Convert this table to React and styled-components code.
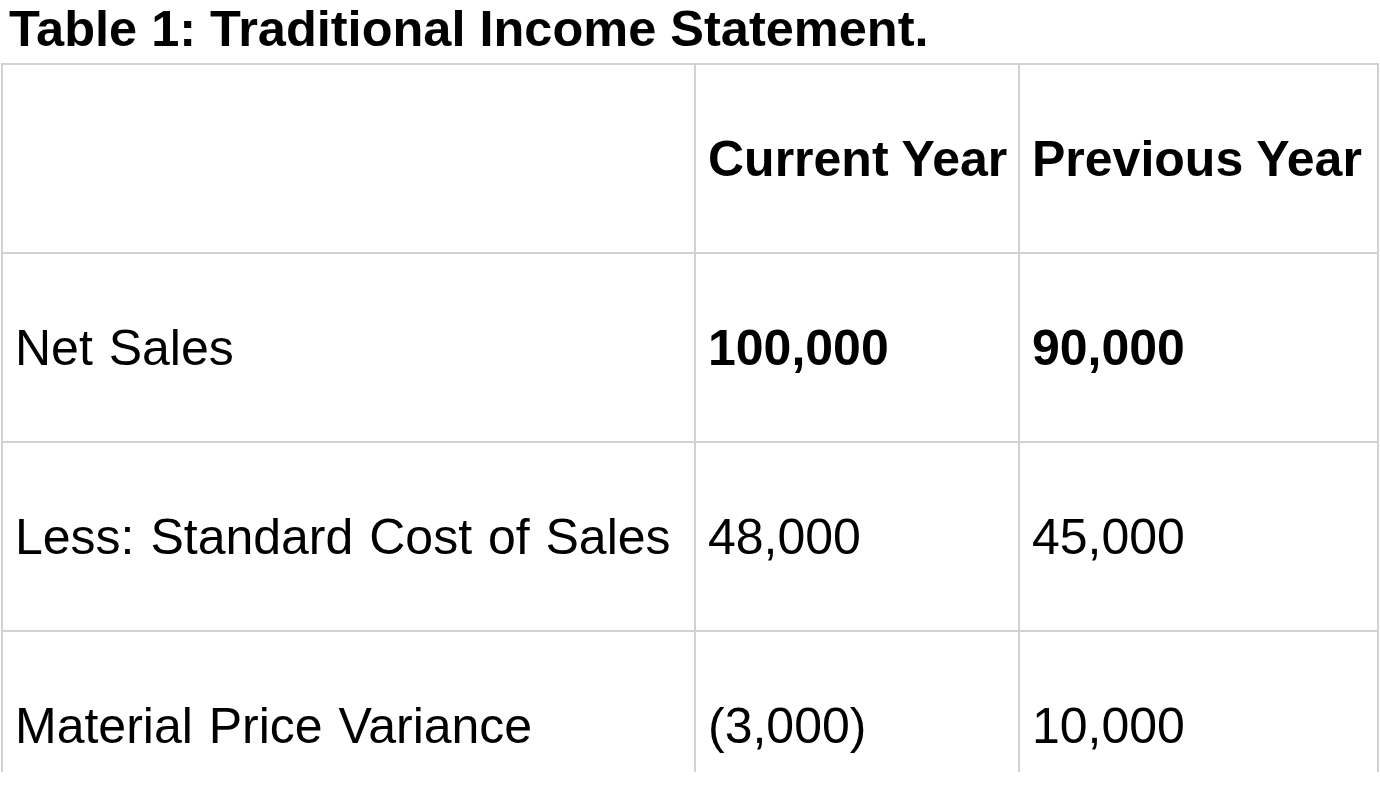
import styled, { createGlobalStyle } from "styled-components";

const GlobalStyle = createGlobalStyle`
  html, body {
    margin: 0;
    padding: 0;
    background: #ffffff;
  }
  body {
    font-family: "Liberation Sans", Arial, sans-serif;
    color: #000000;
  }
`;

const Page = styled.div`
  width: 1380px;
  height: 801px;
  overflow: hidden;
  background: #ffffff;
`;

const Title = styled.h1`
  margin: 0;
  padding: 1px 0 0 9px;
  height: 63px;
  box-sizing: border-box;
  font-size: 50.5px;
  font-weight: 700;
  line-height: 56px;
`;

const Clip = styled.div`
  height: 709px;
  overflow: hidden;
  padding-left: 1px;
`;

export const StyledTable = styled.table`
  border-collapse: collapse;
  border-spacing: 0;
  table-layout: fixed;
  width: 1376px;
  border: 2px solid #d2d2d2;

  th,
  td {
    text-align: left;
    vertical-align: middle;
    padding: 0 12px;
    height: 187px;
    border: 2px solid #d2d2d2;
    font-size: 50px;
    line-height: 56px;
    white-space: nowrap;
  }
`;

const Col = styled.col`
  width: ${(p) => p.$w}px;
`;

const HeaderCell = styled.th`
  font-weight: 700;
`;

const Cell = styled.td`
  font-weight: ${(p) => (p.$bold ? 700 : 400)};
  word-spacing: ${(p) => (p.$bold ? 0 : 2)}px;
`;

const rows = [
  { label: "Net Sales", current: "100,000", previous: "90,000", bold: true },
  { label: "Less: Standard Cost of Sales", current: "48,000", previous: "45,000" },
  { label: "Material Price Variance", current: "(3,000)", previous: "10,000" },
];

const App = () => {
  return (
    <Page>
      <GlobalStyle />
      <Title>Table 1: Traditional Income Statement.</Title>
      <Clip>
        <StyledTable>
          <colgroup>
            <Col $w={693} />
            <Col $w={324} />
            <Col $w={359} />
          </colgroup>
          <thead>
            <tr>
              <HeaderCell />
              <HeaderCell>Current Year</HeaderCell>
              <HeaderCell>Previous Year</HeaderCell>
            </tr>
          </thead>
          <tbody>
            {rows.map((r) => (
              <tr key={r.label}>
                <Cell>{r.label}</Cell>
                <Cell $bold={r.bold}>{r.current}</Cell>
                <Cell $bold={r.bold}>{r.previous}</Cell>
              </tr>
            ))}
          </tbody>
        </StyledTable>
      </Clip>
    </Page>
  );
};

export default App;
